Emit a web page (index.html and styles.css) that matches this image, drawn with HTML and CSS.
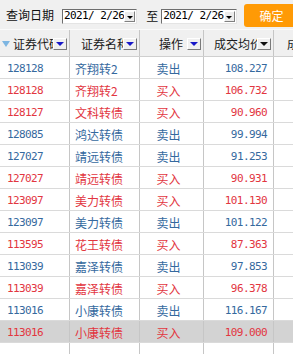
FILE: index.html
```html
<!DOCTYPE html>
<html lang="zh">
<head>
<meta charset="utf-8">
<link rel="stylesheet" href="styles.css">
</head>
<body>
<div class="toolbar">
  <span class="lbl">查询日期</span>
  <div class="date d1"><span class="dtxt">2021/ 2/26</span><span class="dbtn"><i></i></span></div>
  <span class="to">至</span>
  <div class="date d2"><span class="dtxt">2021/ 2/26</span><span class="dbtn"><i></i></span></div>
  <button class="ok">确定</button>
</div>
<div class="table">
  <div class="row head">
    <div class="cell c1"><span class="sort"></span><span class="ht">证券代码</span><span class="dd"><i></i></span></div>
    <div class="cell c2"><span class="ht">证券名称</span><span class="dd"><i></i></span></div>
    <div class="cell c3"><span class="ht">操作</span><span class="dd"><i></i></span></div>
    <div class="cell c4"><span class="ht">成交均价</span><span class="dd dark"><i></i></span></div>
    <div class="cell c5"><span class="ht">成交数量</span></div>
  </div>
  <div class="row sell"><div class="cell c1">128128</div><div class="cell c2">齐翔转2</div><div class="cell c3">卖出</div><div class="cell c4">108.227</div><div class="cell c5"></div></div>
  <div class="row buy"><div class="cell c1">128128</div><div class="cell c2">齐翔转2</div><div class="cell c3">买入</div><div class="cell c4">106.732</div><div class="cell c5"></div></div>
  <div class="row buy"><div class="cell c1">128127</div><div class="cell c2">文科转债</div><div class="cell c3">买入</div><div class="cell c4">90.960</div><div class="cell c5"></div></div>
  <div class="row sell"><div class="cell c1">128085</div><div class="cell c2">鸿达转债</div><div class="cell c3">卖出</div><div class="cell c4">99.994</div><div class="cell c5"></div></div>
  <div class="row sell"><div class="cell c1">127027</div><div class="cell c2">靖远转债</div><div class="cell c3">卖出</div><div class="cell c4">91.253</div><div class="cell c5"></div></div>
  <div class="row buy"><div class="cell c1">127027</div><div class="cell c2">靖远转债</div><div class="cell c3">买入</div><div class="cell c4">90.931</div><div class="cell c5"></div></div>
  <div class="row buy"><div class="cell c1">123097</div><div class="cell c2">美力转债</div><div class="cell c3">买入</div><div class="cell c4">101.130</div><div class="cell c5"></div></div>
  <div class="row sell"><div class="cell c1">123097</div><div class="cell c2">美力转债</div><div class="cell c3">卖出</div><div class="cell c4">101.122</div><div class="cell c5"></div></div>
  <div class="row buy"><div class="cell c1">113595</div><div class="cell c2">花王转债</div><div class="cell c3">买入</div><div class="cell c4">87.363</div><div class="cell c5"></div></div>
  <div class="row sell"><div class="cell c1">113039</div><div class="cell c2">嘉泽转债</div><div class="cell c3">卖出</div><div class="cell c4">97.853</div><div class="cell c5"></div></div>
  <div class="row buy"><div class="cell c1">113039</div><div class="cell c2">嘉泽转债</div><div class="cell c3">买入</div><div class="cell c4">96.378</div><div class="cell c5"></div></div>
  <div class="row sell"><div class="cell c1">113016</div><div class="cell c2">小康转债</div><div class="cell c3">卖出</div><div class="cell c4">116.167</div><div class="cell c5"></div></div>
  <div class="row buy selected"><div class="cell c1">113016</div><div class="cell c2">小康转债</div><div class="cell c3">买入</div><div class="cell c4">109.000</div><div class="cell c5"></div></div>
  <div class="row empty"><div class="cell c1"></div><div class="cell c2"></div><div class="cell c3"></div><div class="cell c4"></div><div class="cell c5"></div></div>
</div>
</body>
</html>
```

FILE: styles.css
```css
html, body {
  margin: 0;
  padding: 0;
  width: 293px;
  height: 354px;
  overflow: hidden;
  background: #ffffff;
  font-family: "Noto Sans CJK SC", "DejaVu Sans", sans-serif;
  font-size: 12px;
}

.toolbar {
  height: 29px;
  background: #f0f0f0;
  display: flex;
  align-items: center;
  white-space: nowrap;
  color: #111;
}

.lbl {
  margin-left: 6px;
  line-height: 12px;
}

.date {
  margin-left: 8px;
  height: 15px;
  box-sizing: border-box;
  background: #fff;
  border-top: 1px solid #6e6e6e;
  border-left: 1px solid #6e6e6e;
  border-right: 1px solid #e4e4e4;
  border-bottom: 1px solid #e4e4e4;
  display: flex;
  align-items: center;
  margin-top: 3px;
}

.d1 { width: 77px; }
.d2 { width: 80px; margin-left: 3px; }

.dtxt {
  font-family: "DejaVu Sans Mono", monospace;
  font-size: 11px;
  letter-spacing: -0.6px;
  color: #000;
  padding-left: 1px;
  flex: 1;
  line-height: 12px;
}

.dbtn {
  width: 11px;
  height: 11px;
  box-sizing: border-box;
  background: #ececec;
  border-top: 1px solid #fff;
  border-left: 1px solid #fff;
  border-right: 1px solid #808080;
  border-bottom: 1px solid #808080;
  margin-right: 1px;
  display: flex;
  align-items: center;
  justify-content: center;
}

.dbtn i {
  display: block;
  width: 0;
  height: 0;
  border-left: 3px solid transparent;
  border-right: 3px solid transparent;
  border-top: 3px solid #000;
  margin-top: 2px;
}

.to {
  margin-left: 9px;
  line-height: 12px;
  margin-top: 3px;
}

.ok {
  margin-left: 7px;
  height: 23px;
  width: 50px;
  border: none;
  border-radius: 3px 0 0 3px;
  background: #ff9a05;
  color: #fff;
  font-family: "Noto Sans CJK SC", sans-serif;
  font-size: 12px;
  padding: 0 0 0 16px;
  text-align: left;
  flex: none;
  margin-top: 1px;
}

.table {
  display: flex;
  flex-direction: column;
}

.row {
  display: grid;
  grid-template-columns: 70px 70px 64px 70px 19px;
  height: 22px;
  box-sizing: border-box;
  border-bottom: 1px solid #dadada;
}

.cell {
  border-right: 1px solid #c6c6c6;
  display: flex;
  align-items: center;
  overflow: hidden;
  white-space: nowrap;
  min-width: 0;
}

.c5 { border-right: none; }

.head {
  height: 28px;
  background: #f0f0f0;
  border-top: 1px solid #fafafa;
  border-bottom: 1px solid #cfcfcf;
  color: #1a1a1a;
}

.head .cell {
  padding-top: 2px;
  box-sizing: border-box;
}

.ht {
  flex: 1;
  min-width: 0;
  overflow: hidden;
  line-height: 14px;
}

.sort {
  width: 0;
  height: 0;
  border-left: 4px solid transparent;
  border-right: 4px solid transparent;
  border-top: 6px solid #7eb6e2;
  margin-left: 2px;
  margin-right: 3px;
  flex: none;
}

.dd {
  flex: none;
  width: 14px;
  height: 12px;
  box-sizing: border-box;
  background: #f0f0f0;
  border-top: 1px solid #ffffff;
  border-left: 1px solid #ffffff;
  border-right: 1px solid #7a7a7a;
  border-bottom: 1px solid #7a7a7a;
  display: flex;
  align-items: center;
  justify-content: center;
  margin-right: 2px;
}

.dd i {
  display: block;
  width: 0;
  height: 0;
  border-left: 4px solid transparent;
  border-right: 4px solid transparent;
  border-top: 4px solid #1818c8;
}

.dd.dark i { border-top-color: #111; }

.head .c2 { padding-left: 11px; }
.head .c3 { padding-left: 19px; }
.head .c4 { padding-left: 10px; }
.head .c5 { padding-left: 13px; }

.row:not(.head) .c1 {
  padding-left: 7px;
  padding-top: 1px;
  font-family: "DejaVu Sans Mono", monospace;
  font-size: 11px;
  letter-spacing: -0.6px;
}

.row:not(.head) .c2 { padding-left: 5px; padding-top: 1px; }

.row:not(.head) .c3 {
  justify-content: center;
  padding-right: 6px;
  padding-top: 1px;
}

.row:not(.head) .c4 {
  justify-content: flex-end;
  padding-right: 6px;
  padding-top: 1px;
  font-family: "DejaVu Sans Mono", monospace;
  font-size: 11px;
  letter-spacing: -0.6px;
}

.sell { color: #35699e; }
.buy { color: #e2363f; }

.selected { background: #d3d3d3; }

.empty {
  border-bottom: none;
  height: 20px;
}
```
